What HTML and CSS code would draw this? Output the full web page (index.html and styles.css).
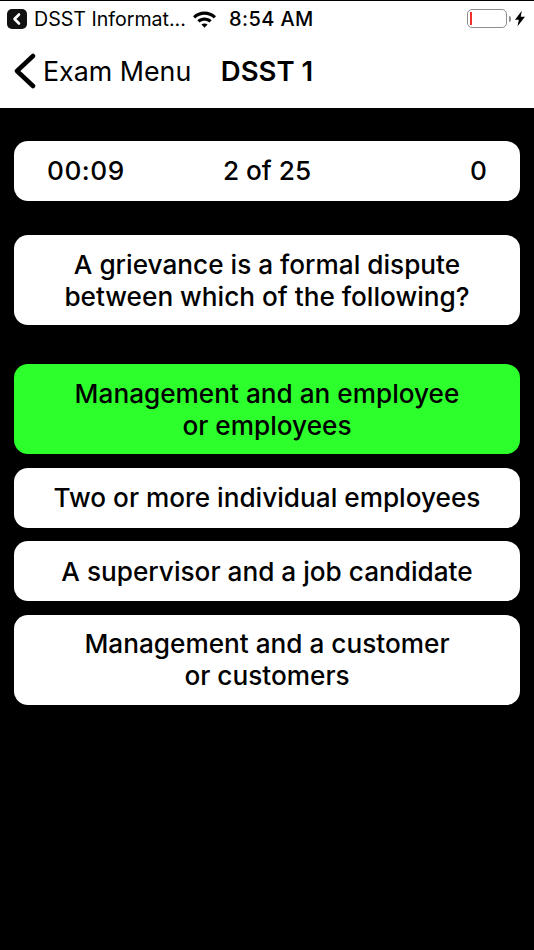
FILE: index.html
```html
<!DOCTYPE html>
<html lang="en">
<head>
  <meta charset="UTF-8" />
  <meta name="viewport" content="width=device-width, initial-scale=1.0" />
  <title>DSST 1</title>
  <link rel="stylesheet" href="styles.css">
</head>
<body>
  <header class="top">
    <div class="status">
      <div class="status-left">
        <svg class="app-back" width="20" height="20" viewBox="0 0 20 20">
          <rect width="20" height="20" rx="5" fill="#111" />
          <path d="M12 5.500 7.500 10l4.500 4.500" fill="none" stroke="#fff" stroke-width="2.600" stroke-linecap="round" stroke-linejoin="round" />
        </svg>
        <span class="app-name">DSST Informat...</span>
      </div>
      <svg class="wifi" width="23" height="18" viewBox="0 0 24 18">
        <path d="M0 6C6.800-.4 17.200-.4 24 6l-2.300 2.500C16.200 3.400 7.800 3.400 2.300 8.500z" fill="#000" />
        <path d="M4.500 10.300c4.300-3.900 10.700-3.900 15 0l-2.300 2.400c-3-2.600-7.400-2.600-10.400 0z" fill="#000" />
        <path d="M8.800 14.700c1.900-1.500 4.500-1.500 6.400 0L12 18z" fill="#000" />
      </svg>
      <span class="clock">8:54 AM</span>
      <div class="status-right">
        <div class="battery"><div class="battery-level"></div></div>
        <div class="battery-cap"></div>
        <svg class="bolt" width="10" height="17" viewBox="0 0 11 17">
          <path d="M7.500 0 0 9.800h4.200L2.800 17 11 6.600H6.300z" fill="#000" />
        </svg>
      </div>
    </div>
    <nav class="nav">
      <a class="back" href="#">
        <svg width="23" height="36" viewBox="0 0 23 36">
          <path d="M20 3 4 18l16 15" fill="none" stroke="#000" stroke-width="4.500" stroke-linecap="round" stroke-linejoin="round" />
        </svg>
        <span>Exam Menu</span>
      </a>
      <h1 class="title">DSST 1</h1>
    </nav>
  </header>

  <main class="quiz">
    <section class="card score">
      <span class="time">00:09</span>
      <span class="count">2 of 25</span>
      <span class="points">0</span>
    </section>

    <section class="card question">A grievance is a formal dispute<br>between which of the following?</section>

    <section class="answers">
      <button class="card answer correct">Management and an employee<br>or employees</button>
      <button class="card answer">Two or more individual employees</button>
      <button class="card answer">A supervisor and a job candidate</button>
      <button class="card answer">Management and a customer<br>or customers</button>
    </section>
  </main>
</body>
</html>
```

FILE: styles.css
```css
html, body {
  margin: 0;
  padding: 0;
  height: 100%;
}
body {
  width: 534px;
  height: 950px;
  overflow: hidden;
  background-color: #000;
  color: #000;
  font-family: 'Inter', 'Liberation Sans', sans-serif;
}
.top {
  background-color: #fff;
  height: 108px;
  border-top: 1px solid #000;
  box-sizing: border-box;
}
.status {
  display: flex;
  align-items: center;
  height: 35px;
  padding: 0 9px 0 7px;
}
.status-left {
  display: flex;
  align-items: center;
  width: 186px;
}
.app-back {
  flex: none;
}
.app-name {
  margin-left: 7px;
  font-size: 19.600px;
  white-space: nowrap;
}
.wifi {
  flex: none;
}
.clock {
  margin-left: 13px;
  font-size: 20px;
  font-weight: 500;
  white-space: nowrap;
  letter-spacing: 0.4px;
}
.status-right {
  display: flex;
  align-items: center;
  margin-left: auto;
}
.battery {
  width: 40px;
  height: 19px;
  box-sizing: border-box;
  border: 1.500px solid #8e8e8e;
  border-radius: 5px;
  padding: 2px;
}
.battery-level {
  width: 2px;
  height: 100%;
  background-color: #f0312a;
}
.battery-cap {
  width: 2px;
  height: 6px;
  margin-left: 2px;
  background-color: #8e8e8e;
  border-radius: 0 2px 2px 0;
}
.bolt {
  margin-left: 4px;
}
.nav {
  position: relative;
  display: flex;
  align-items: center;
  justify-content: center;
  height: 70px;
}
.back {
  position: absolute;
  left: 13px;
  top: 17px;
  display: flex;
  align-items: center;
  gap: 7px;
  color: #000;
  text-decoration: none;
  font-size: 26.800px;
}
.title {
  margin: 0;
  font-size: 27.500px;
  font-weight: 600;
}
.quiz {
  display: flex;
  flex-direction: column;
  padding: 33px 14px 0;
}
.card {
  background-color: #fff;
  border-radius: 14px;
  box-sizing: border-box;
  text-align: center;
  font-size: 26.200px;
  font-weight: 500;
  line-height: 32px;
}
.score {
  display: grid;
  grid-template-columns: 1fr 1fr 1fr;
  align-items: center;
  height: 60px;
  padding: 0 33px;
}
.time {
  text-align: left;
  letter-spacing: 0.500px;
}
.points {
  text-align: right;
}
.question {
  margin-top: 34px;
  padding: 14px 0 12px;
}
.answers {
  display: flex;
  flex-direction: column;
  gap: 13.500px;
  margin-top: 39px;
}
.answer {
  display: block;
  width: 100%;
  min-height: 60px;
  border: none;
  padding: 13.500px 0 12.500px;
  color: #000;
  font-family: inherit;
}
.correct {
  background-color: #2cff2c;
}
```
